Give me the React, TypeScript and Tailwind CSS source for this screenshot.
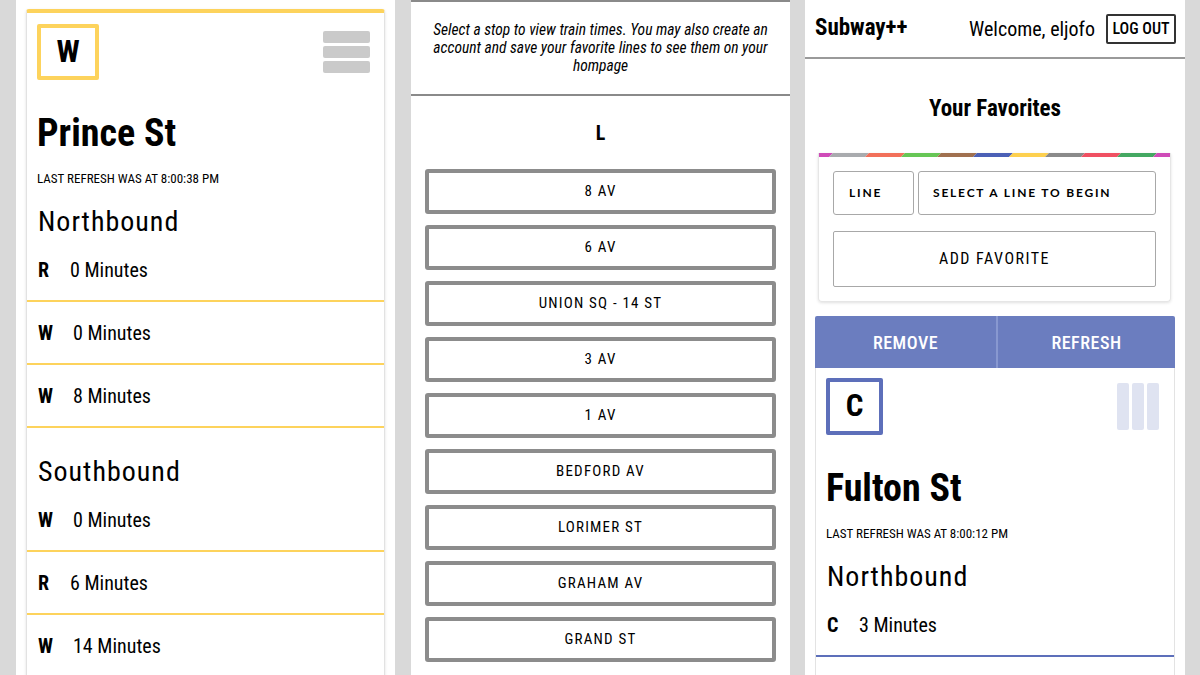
import React from 'react'

type Section = { dir: string; rows: [string, string][] }

const LeftSections: Section[] = [
  { dir: 'Northbound', rows: [['R', '0 Minutes'], ['W', '0 Minutes'], ['W', '8 Minutes']] },
  { dir: 'Southbound', rows: [['W', '0 Minutes'], ['R', '6 Minutes'], ['W', '14 Minutes']] },
]

const RightSections: Section[] = [{ dir: 'Northbound', rows: [['C', '3 Minutes']] }]

const stops = ['8 AV', '6 AV', 'UNION SQ - 14 ST', '3 AV', '1 AV', 'BEDFORD AV', 'LORIMER ST', 'GRAHAM AV', 'GRAND ST']

const stripe = ['bg-[#a9abae]', 'bg-[#f2705a]', 'bg-[#66c655]', 'bg-[#a0704f]', 'bg-[#4b60b6]', 'bg-[#fdd04f]', 'bg-[#8a8a8a]', 'bg-[#f05062]', 'bg-[#44a862]']

const StationBody = ({ letter, station, time, sections, yellow, vertical }: {
  letter: string
  station: string
  time: string
  sections: Section[]
  yellow: boolean
  vertical: boolean
}) => {
  const badge = yellow ? 'border-[#fdd35c] w-[62px] h-[56px]' : 'border-[#5d6fba] w-[57px] h-[57px]'
  const line = yellow ? 'border-[#fdd35c]' : 'border-[#5d6fba]'

  return (
    <>
      <div className={`flex justify-between items-start px-[10px] ${yellow ? 'pt-[11px]' : 'pt-[10px]'}`}>
        <div className={`border-4 rounded-[2px] flex items-center justify-center text-[31px] font-bold ${badge}`}>
          {letter}
        </div>

        {/* menu icon */}
        {vertical ? (
          <div className="flex gap-[3px] mt-[5px] mr-[5px]">
            <div className="w-[12px] h-[47px] rounded-[2px] bg-[#dfe3f1]"/>
            <div className="w-[12px] h-[47px] rounded-[2px] bg-[#dfe3f1]"/>
            <div className="w-[12px] h-[47px] rounded-[2px] bg-[#dfe3f1]"/>
          </div>
        ) : (
          <div className="flex flex-col gap-[3px] mt-[7px] mr-[4px]">
            <div className="w-[47px] h-[12px] rounded-[2px] bg-[#cacaca]"/>
            <div className="w-[47px] h-[12px] rounded-[2px] bg-[#cacaca]"/>
            <div className="w-[47px] h-[12px] rounded-[2px] bg-[#cacaca]"/>
          </div>
        )}
      </div>

      <h1 className="px-[10px] mt-[34px] text-[38px] leading-[38px] font-bold">{station}</h1>
      <p className="px-[10px] mt-[19px] text-[13px] leading-[16px]">LAST REFRESH WAS AT {time}</p>

      {sections.map((s, i) => (
        <div key={s.dir}>
          <h2 className={`px-[11px] text-[28px] leading-[34px] tracking-[1px] ${i === 0 ? 'mt-[18px]' : 'mt-[27px]'}`}>
            {s.dir}
          </h2>
          {s.rows.map(([l, m], j) => (
            <div key={j} className={`h-[63px] border-b-2 ${line} flex items-center px-[11px] text-[20px]`}>
              <span className="font-bold w-[32px] text-[20px]">{l}</span>
              <span className={l === 'W' ? 'ml-[3px]' : ''}>{m}</span>
            </div>
          ))}
        </div>
      ))}
    </>
  )
}

const App = () => {
  return (
    <div className="w-[1200px] h-[675px] overflow-hidden bg-[#d9d9d9] flex gap-4 pl-4 text-black font-['Roboto_Condensed','Liberation_Sans_Narrow',Roboto,sans-serif]">
      {/* Station page */}
      <div className="w-[379px] shrink-0 bg-white px-[10px] pt-[9px] overflow-hidden">
        <div className="border border-[#e2e2e2] border-t-4 border-t-[#fdd35c] rounded-t-[3px] shadow-[0_1px_3px_rgba(0,0,0,0.12)] h-[700px]">
          <StationBody
            letter="W"
            station="Prince St"
            time="8:00:38 PM"
            sections={LeftSections}
            yellow={true}
            vertical={false}
          />
        </div>
      </div>

      {/* Stops list */}
      <div className="w-[379px] shrink-0 bg-white border-t-2 border-[#8a8a8a] overflow-hidden">
        <div className="h-[94px] border-b-2 border-[#8a8a8a] flex items-center justify-center text-center italic text-[15.5px] leading-[18px] px-[10px]">
          <p>
            Select a stop to view train times. You may also create an<br/>
            account and save your favorite lines to see them on your<br/>
            hompage
          </p>
        </div>

        <p className="mt-[25px] text-center text-[20px] leading-[24px] font-bold">L</p>

        <div className="mt-[24px] mx-[14px] flex flex-col gap-[11px]">
          {stops.map((s) => (
            <button
              key={s}
              className="h-[45px] border-4 border-[#8c8c8c] rounded-[3px] flex items-center justify-center text-[15px] tracking-[1.2px]"
            >
              {s}
            </button>
          ))}
        </div>
      </div>

      {/* Home / favorites */}
      <div className="w-[380px] shrink-0 -ml-[1px] bg-white overflow-hidden">
        <div className="h-[59px] border-b-2 border-[#9a9a9a] flex items-center justify-between pl-[10px] pr-[9px]">
          <p className="text-[23px] font-bold">Subway++</p>
          <div className="flex items-center gap-[11px]">
            <p className="text-[20px]">Welcome, eljofo</p>
            <button className="w-[70px] h-[30px] border-2 border-[#333] rounded-[2px] text-[16px] font-medium">
              LOG OUT
            </button>
          </div>
        </div>

        <h2 className="mt-[36px] text-center text-[23px] leading-[28px] font-bold">Your Favorites</h2>

        <div className="mt-[30px] ml-[13px] mr-[14px] border border-t-0 border-[#e6e6e6] rounded-b-[4px] shadow-[0_1px_3px_rgba(0,0,0,0.12)]">
          <div className="h-[4px] overflow-hidden">
            <div className="flex h-full -mx-[2px]">
              <div className="w-[14px] h-full -skew-x-[45deg] bg-[#cf4bb8]"/>
              {stripe.map((c) => (
                <div key={c} className={`w-[36px] h-full -skew-x-[45deg] ${c}`}/>
              ))}
              <div className="flex-1 h-full -skew-x-[45deg] bg-[#cf4bb8]"/>
            </div>
          </div>

          <div className="px-[14px] pt-[14px] pb-[14px]">
            <div className="flex gap-[4px] h-[44px] font-['Lato',sans-serif] text-[12px] font-bold tracking-[0.15em]">
              <div className="w-[81px] border border-[#a8a8a8] rounded-[3px] flex items-center pl-[15px]">LINE</div>
              <div className="flex-1 border border-[#a8a8a8] rounded-[3px] flex items-center pl-[14px]">SELECT A LINE TO BEGIN</div>
            </div>
            <button className="mt-[16px] w-full h-[56px] border border-[#a8a8a8] rounded-[2px] text-[16px] tracking-[1.5px]">
              ADD FAVORITE
            </button>
          </div>
        </div>

        <div className="mt-[14px] mx-[10px]">
          <div className="h-[52px] bg-[#6b7dbf] rounded-t-[2px] flex text-white text-[18px] font-medium tracking-[0.5px]">
            <div className="w-[183px] border-r-2 border-[#8898d0] flex items-center justify-center">REMOVE</div>
            <div className="flex-1 flex items-center justify-center">REFRESH</div>
          </div>
          <div className="border-x border-[#e3e3e3] h-[400px]">
            <StationBody
              letter="C"
              station="Fulton St"
              time="8:00:12 PM"
              sections={RightSections}
              yellow={false}
              vertical={true}
            />
          </div>
        </div>
      </div>
    </div>
  )
}

export default App
